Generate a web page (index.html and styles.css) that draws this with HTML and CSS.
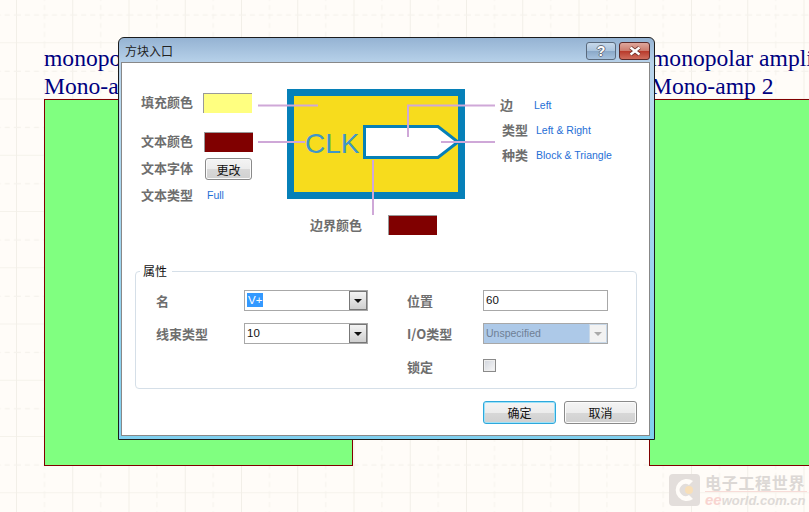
FILE: index.html
```html
<!DOCTYPE html>
<html lang="zh">
<head>
  <meta charset="UTF-8" />
  <title>方块入口</title>
  <link rel="stylesheet" href="styles.css">
</head>
<body>

  <!-- Schematic sheet behind the dialog -->
  <div class="sheet">
    <svg class="grid" width="809" height="512">
      <defs>
        <pattern id="cells" width="56.25" height="56.25" patternUnits="userSpaceOnUse" x="16" y="-13">
          <path d="M0.5 0 V56.25 M0 56 H56.25" stroke="#f2efe8" fill="none"/>
          <path d="M28.5 0 V56.25 M0 28 H56.25" stroke="#f5f2ec" stroke-dasharray="5 4" fill="none"/>
        </pattern>
      </defs>
      <rect width="809" height="512" fill="url(#cells)"/>
    </svg>

    <div class="block block-left">
      <div class="block-text">monopolar amplifier 1<br>Mono-amp 1</div>
      <div class="block-box"></div>
    </div>
    <div class="block block-right">
      <div class="block-text">monopolar amplifier 2<br>Mono-amp 2</div>
      <div class="block-box"></div>
    </div>

    <!-- Watermark -->
    <div class="watermark">
      <svg class="wm-logo" width="32" height="34" viewBox="0 0 32 34">
        <rect x="0" y="1" width="31" height="32" rx="4" fill="#e3dedb"/>
        <path d="M24 8 A11 11 0 1 0 24 26 L20 22 A6 6 0 1 1 20 12 Z" fill="#fffcf8"/>
        <circle cx="20" cy="17" r="4" fill="#f8dfb8"/>
      </svg>
      <div class="wm-text">
        <div class="wm-cn">电子工程世界</div>
        <div class="wm-en"><span class="wm-ee">ee</span>world.com.cn</div>
      </div>
    </div>
  </div>

  <!-- Dialog -->
  <div class="dialog">
    <div class="titlebar">
      <span class="title">方块入口</span>
      <div class="win-btns">
        <div class="win-btn help">?</div>
        <div class="win-btn close">
          <svg width="14" height="10" viewBox="0 0 14 10">
            <path d="M2.5 1.5 L11.5 8.5 M11.5 1.5 L2.5 8.5" stroke="#6a2f28" stroke-width="4" fill="none"/>
            <path d="M2.5 1.5 L11.5 8.5 M11.5 1.5 L2.5 8.5" stroke="#fff" stroke-width="2.4" fill="none"/>
          </svg>
        </div>
      </div>
    </div>

    <div class="client">
      <div class="preview">
        <!-- Leader lines and the port drawing -->
        <svg class="leaders" width="528" height="160" viewBox="0 0 528 160">
          <rect x="168.5" y="29.5" width="171" height="103" fill="#f7dc1d" stroke="#0680b8" stroke-width="7"/>
          <path d="M242.5 63.5 H316 L336 79 L316 94.5 H242.5 Z" fill="#fff" stroke="#0680b8" stroke-width="3"/>
          <text x="183" y="90" class="clk">CLK</text>
          <g fill="none" stroke="#cfa8d8" stroke-width="2">
            <path d="M136 42.5 H196"/>
            <path d="M136 79 H183"/>
            <path d="M251 97 V152"/>
            <path d="M286 74 V42.5 H373"/>
            <path d="M319 79 H373"/>
          </g>
        </svg>

        <div class="props-left">
          <div class="prop-row tall"><span class="lbl">填充颜色</span><div class="swatch yellow"></div></div>
          <div class="prop-row tall gap-big"><span class="lbl">文本颜色</span><div class="swatch maroon shift"></div></div>
          <div class="prop-row"><span class="lbl">文本字体</span><button class="btn small">更改</button></div>
          <div class="prop-row tall"><span class="lbl">文本类型</span><span class="val full">Full</span></div>
        </div>

        <div class="props-right">
          <div class="side-row"><span class="lbl side-a">边</span><span class="val">Left</span></div>
          <div class="side-row"><span class="lbl side-b">类型</span><span class="val">Left &amp; Right</span></div>
          <div class="side-row"><span class="lbl side-b">种类</span><span class="val">Block &amp; Triangle</span></div>
        </div>
      </div>

      <div class="border-row">
        <span class="lbl">边界颜色</span>
        <div class="swatch maroon"></div>
      </div>

      <fieldset class="group">
        <legend>属性</legend>
        <div class="fields">
          <span class="lbl">名</span>
          <div class="combo"><span class="combo-text"><span class="selected">V+</span></span><span class="arrow"></span></div>
          <span class="lbl">位置</span>
          <div class="combo"><span class="combo-text">60</span></div>

          <span class="lbl">线束类型</span>
          <div class="combo"><span class="combo-text">10</span><span class="arrow"></span></div>
          <span class="lbl">I/O类型</span>
          <div class="combo disabled"><span class="combo-text">Unspecified</span><span class="arrow"></span></div>

          <span></span>
          <span></span>
          <span class="lbl">锁定</span>
          <div class="check"></div>
        </div>
      </fieldset>

      <div class="actions">
        <button class="btn wide focus">确定</button>
        <button class="btn wide">取消</button>
      </div>
    </div>
  </div>

</body>
</html>
```

FILE: styles.css
```css
body {
  margin: 0;
  overflow: hidden;
  font-family: "Liberation Sans", "Noto Sans CJK SC", sans-serif;
}

.sheet {
  position: relative;
  width: 809px;
  height: 512px;
  overflow: hidden;
  background-color: #fffcf8;
}

.grid {
  position: absolute;
  left: 0;
  top: 0;
}

.block {
  position: absolute;
  top: 44px;
}

.block-left { left: 44px; width: 309px; }
.block-right { left: 651px; width: 220px; }

.block-text {
  font-family: "Liberation Serif", serif;
  font-size: 23.6px;
  line-height: 28px;
  color: #00007f;
  white-space: nowrap;
  height: 55px;
}

.block-right .block-box { margin-left: -2px; }

.block-box {
  height: 365px;
  background: #80ff80;
  border: 1px solid #800000;
}

.watermark {
  position: absolute;
  left: 669px;
  top: 473px;
  display: flex;
  gap: 4px;
}

.wm-text { width: 102px; }

.wm-cn {
  font-family: "Noto Sans CJK SC", sans-serif;
  font-size: 16px;
  font-weight: 700;
  line-height: 18px;
  letter-spacing: 0.7px;
  color: #dcd8d5;
  border-bottom: 1px solid #f8dcd8;
  white-space: nowrap;
}

.wm-en {
  font-size: 13px;
  font-weight: 700;
  font-style: italic;
  line-height: 15px;
  color: #dedad7;
  white-space: nowrap;
}

.wm-ee { color: #f8d4d0; font-size: 15px; }

/* Dialog window */
.dialog {
  position: absolute;
  left: 118px;
  top: 37px;
  width: 535px;
  height: 401px;
  border: 1px solid #1c1c1c;
  border-radius: 6px 6px 0 0;
  background: linear-gradient(to bottom, #95b3d3 0, #b8d2ea 25px, #b8d8ee 60px, #7fd0f0 100%);
  display: flex;
  flex-direction: column;
}

.titlebar {
  height: 24px;
  flex: none;
  display: flex;
  justify-content: space-between;
  padding: 4px 4px 0 6px;
  box-sizing: border-box;
}

.title {
  font-family: "Noto Sans CJK SC", sans-serif;
  font-size: 12px;
  line-height: 17px;
  color: #222;
}

.win-btns { display: flex; gap: 3px; }

.win-btn {
  height: 16px;
  border: 1px solid #5a6a7d;
  border-radius: 3px;
  display: flex;
  align-items: center;
  justify-content: center;
}

.help {
  width: 28px;
  font-size: 14px;
  font-weight: 700;
  color: #fff;
  text-shadow: 1px 0 0 #6b7280, -1px 0 0 #6b7280, 0 1px 0 #6b7280, 0 -1px 0 #6b7280;
  background: linear-gradient(to bottom, #c6d8ea 0, #a9c3dd 50%, #8aa8c8 51%, #a6c2de 100%);
}

.close {
  width: 29px;
  border-color: #5a2a2a;
  background: linear-gradient(to bottom, #dfa79c 0, #cc7a6b 50%, #b8392a 51%, #cf6d5c 100%);
}

.client {
  flex: 1;
  margin: 0 4px 3px 2px;
  background: #fff;
  border: 1px solid #888;
  position: relative;
}

.lbl {
  font-family: "Noto Sans CJK SC", sans-serif;
  font-size: 13px;
  font-weight: 700;
  color: #6e6e6e;
  white-space: nowrap;
}

.val {
  font-size: 10.5px;
  color: #1f6fd6;
  white-space: nowrap;
}

/* Top half: preview with the labels on both sides */
.preview {
  display: flex;
  height: 151px;
  padding-top: 30px;
  box-sizing: border-box;
}

.leaders {
  position: absolute;
  left: 0;
  top: 0;
}

.clk {
  font-family: "Liberation Sans", sans-serif;
  font-size: 28px;
  fill: #3f96c8;
}

.props-left {
  position: relative;
  width: 378px;
  padding-left: 19px;
  box-sizing: border-box;
}

.prop-row {
  display: flex;
  align-items: center;
  margin-bottom: 6px;
}

.prop-row .lbl {
  width: 62px;
  padding-bottom: 3px;
}

.tall { height: 20px; }
.gap-big { margin-top: 19px; }

.swatch {
  width: 48px;
  height: 19px;
  border-top: 1px solid #999;
  border-left: 1px solid #999;
}

.yellow { background: #ffff80; }
.maroon { background: #800000; }
.shift { margin-left: 1px; }

.full { margin-left: 4px; margin-top: -3px; }

.props-right {
  position: relative;
  margin-top: -1px;
}

.side-row {
  display: flex;
  align-items: center;
  height: 25px;
}

.side-a { width: 34px; }
.side-b { width: 34px; margin-left: 2px; }

.border-row {
  position: relative;
  display: flex;
  align-items: center;
  height: 20px;
  padding-left: 188px;
  margin-top: 1px;
}

.border-row .lbl {
  width: 78px;
  padding-bottom: 2px;
}

/* Group box */
.group {
  margin: 28px 12px 0 13px;
  padding: 0 0 0 20px;
  height: 126px;
  box-sizing: border-box;
  border: 1px solid #d5dfe8;
  border-radius: 4px;
  min-width: 0;
}

.group legend {
  font-family: "Noto Sans CJK SC", sans-serif;
  font-size: 12px;
  line-height: 16px;
  color: #111;
  padding: 0 5px 0 3px;
  margin-left: -16px;
}

.fields {
  display: grid;
  grid-template-columns: 88px 124px 115px 125px;
  grid-auto-rows: 21px;
  row-gap: 12px;
  align-items: center;
  margin-top: 11px;
}

.fields > .lbl:nth-child(4n+3) { padding-left: 39px; }

.combo {
  height: 21px;
  box-sizing: border-box;
  border: 1px solid #a8a8a8;
  background: #fff;
  display: flex;
  align-items: center;
  justify-content: space-between;
  font-size: 11.5px;
  color: #111;
}

.combo-text {
  padding-left: 2px;
  padding-bottom: 1px;
}

.selected {
  display: inline-block;
  padding: 1px 1px;
  background: #3399ff;
  color: #fff;
}

.arrow {
  width: 16px;
  height: 17px;
  border: 1px solid #777;
  background: linear-gradient(to bottom, #f4f4f4, #cfcfcf);
  position: relative;
}

.arrow::after {
  content: "";
  position: absolute;
  left: 4px;
  top: 7px;
  border-left: 4px solid transparent;
  border-right: 4px solid transparent;
  border-top: 4px solid #111;
}

.disabled {
  background: #adc9e8;
  color: #6f7f95;
  font-size: 10.5px;
}

.disabled .arrow {
  border-color: #c8d8e8;
  background: #f2f2f2;
}

.disabled .arrow::after { border-top-color: #aaa; }

.check {
  width: 11px;
  height: 11px;
  margin-top: -2px;
  border: 1px solid #8a8a8a;
  background: linear-gradient(135deg, #d0d4dc, #f8f8f8);
  box-shadow: inset 0 0 0 1px #eee;
}

/* Buttons */
.btn {
  font-family: "Noto Sans CJK SC", sans-serif;
  font-size: 12px;
  color: #111;
  border: 1px solid #8a8a8a;
  border-radius: 3px;
  padding: 0;
  background: linear-gradient(to bottom, #f4f4f4 0, #ececec 50%, #d8d8d8 51%, #d0d0d0 100%);
  box-shadow: inset 0 0 0 1px #fbfbfb;
}

.small { width: 47px; height: 22px; margin-left: 2px; }
.wide { width: 73px; height: 23px; }

.focus {
  border-color: #2ea8dc;
  box-shadow: inset 0 0 0 1px #9fe2f8;
}

.actions {
  display: flex;
  justify-content: flex-end;
  gap: 8px;
  margin: 12px 12px 0 0;
}
```
